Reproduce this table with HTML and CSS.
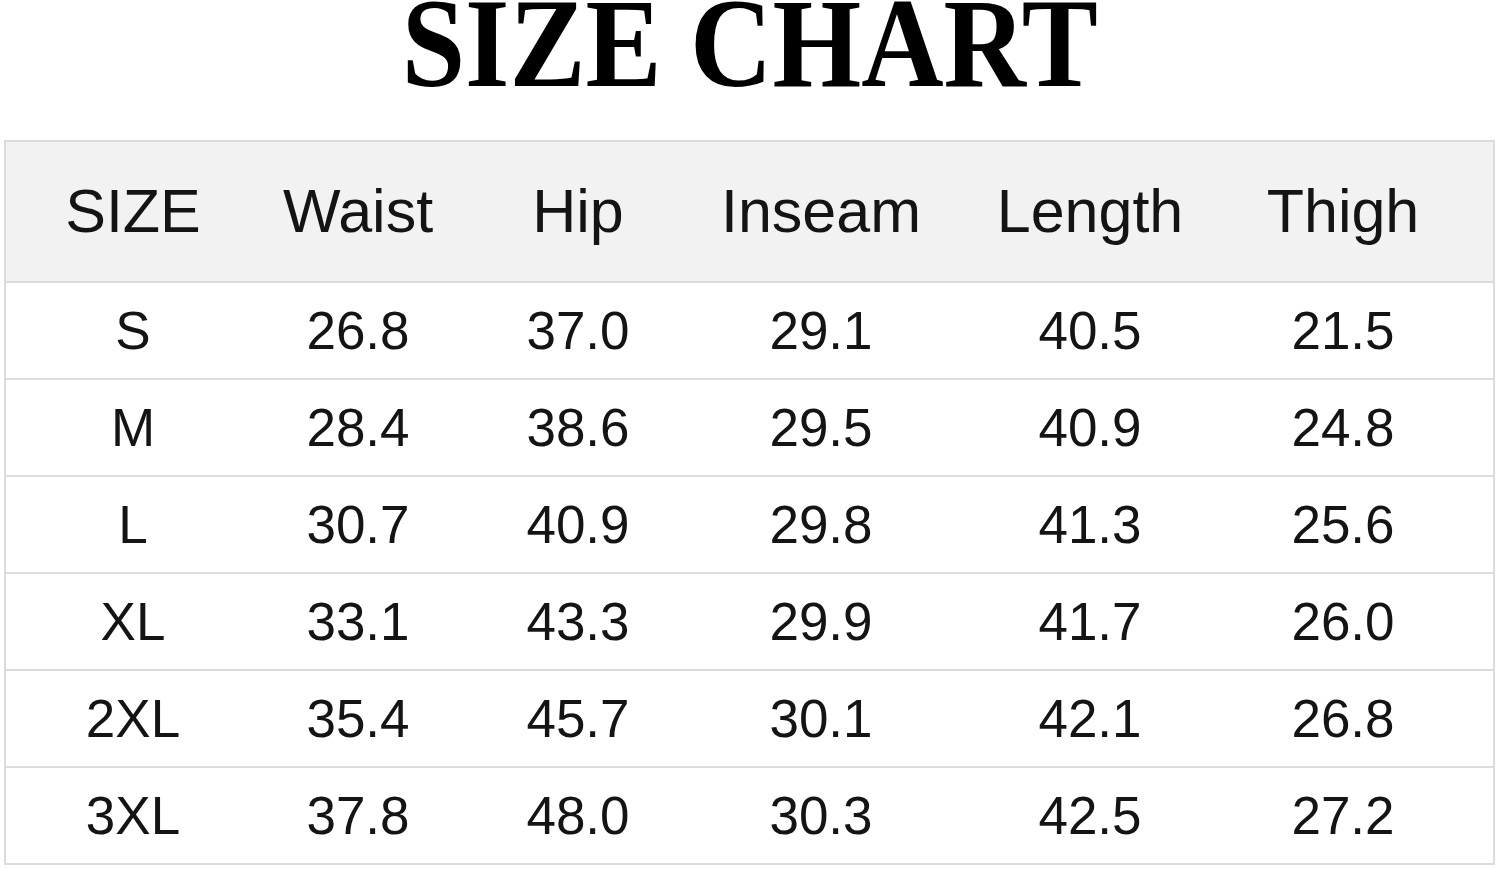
FILE: index.html
```html
<!DOCTYPE html>
<html>
<head>
<meta charset="utf-8">
<link rel="stylesheet" href="styles.css">
</head>
<body>
<h1 class="title">SIZE CHART</h1>
<div class="chart">
  <div class="row head">
    <div class="cell">SIZE</div><div class="cell">Waist</div><div class="cell">Hip</div><div class="cell">Inseam</div><div class="cell">Length</div><div class="cell">Thigh</div>
  </div>
  <div class="row">
    <div class="cell">S</div><div class="cell">26.8</div><div class="cell">37.0</div><div class="cell">29.1</div><div class="cell">40.5</div><div class="cell">21.5</div>
  </div>
  <div class="row">
    <div class="cell">M</div><div class="cell">28.4</div><div class="cell">38.6</div><div class="cell">29.5</div><div class="cell">40.9</div><div class="cell">24.8</div>
  </div>
  <div class="row">
    <div class="cell">L</div><div class="cell">30.7</div><div class="cell">40.9</div><div class="cell">29.8</div><div class="cell">41.3</div><div class="cell">25.6</div>
  </div>
  <div class="row">
    <div class="cell">XL</div><div class="cell">33.1</div><div class="cell">43.3</div><div class="cell">29.9</div><div class="cell">41.7</div><div class="cell">26.0</div>
  </div>
  <div class="row">
    <div class="cell">2XL</div><div class="cell">35.4</div><div class="cell">45.7</div><div class="cell">30.1</div><div class="cell">42.1</div><div class="cell">26.8</div>
  </div>
  <div class="row last">
    <div class="cell">3XL</div><div class="cell">37.8</div><div class="cell">48.0</div><div class="cell">30.3</div><div class="cell">42.5</div><div class="cell">27.2</div>
  </div>
</div>
</body>
</html>
```
FILE: styles.css
```css
html, body {
  margin: 0;
  padding: 0;
  background: #ffffff;
}
body {
  width: 1500px;
  height: 869px;
  overflow: hidden;
  font-family: "Liberation Sans", Arial, sans-serif;
  color: #141414;
}
.title {
  margin: 0;
  height: 140px;
  line-height: 82px;
  padding-top: 3px;
  box-sizing: border-box;
  text-align: center;
  font-family: "Liberation Serif", "Times New Roman", serif;
  font-weight: 700;
  font-size: 126px;
  letter-spacing: 0;
  color: #000;
  transform: scaleX(0.905);
  transform-origin: 748px 0;
}
.chart {
  margin-left: 4px;
  width: 1491px;
  box-sizing: border-box;
  border: 2px solid #dcdcdc;
}
.row {
  display: grid;
  grid-template-columns: 254px 196px 244px 242px 296px 210px;
  height: 97px;
  box-sizing: border-box;
  border-bottom: 2px solid #dcdcdc;
  align-items: center;
  font-size: 53px;
}
.row.last {
  border-bottom: none;
  height: 95px;
}
.row.head {
  height: 141px;
  background: #f2f2f2;
  font-size: 61px;
}
.cell {
  text-align: center;
  line-height: 1;
  white-space: nowrap;
}
```
